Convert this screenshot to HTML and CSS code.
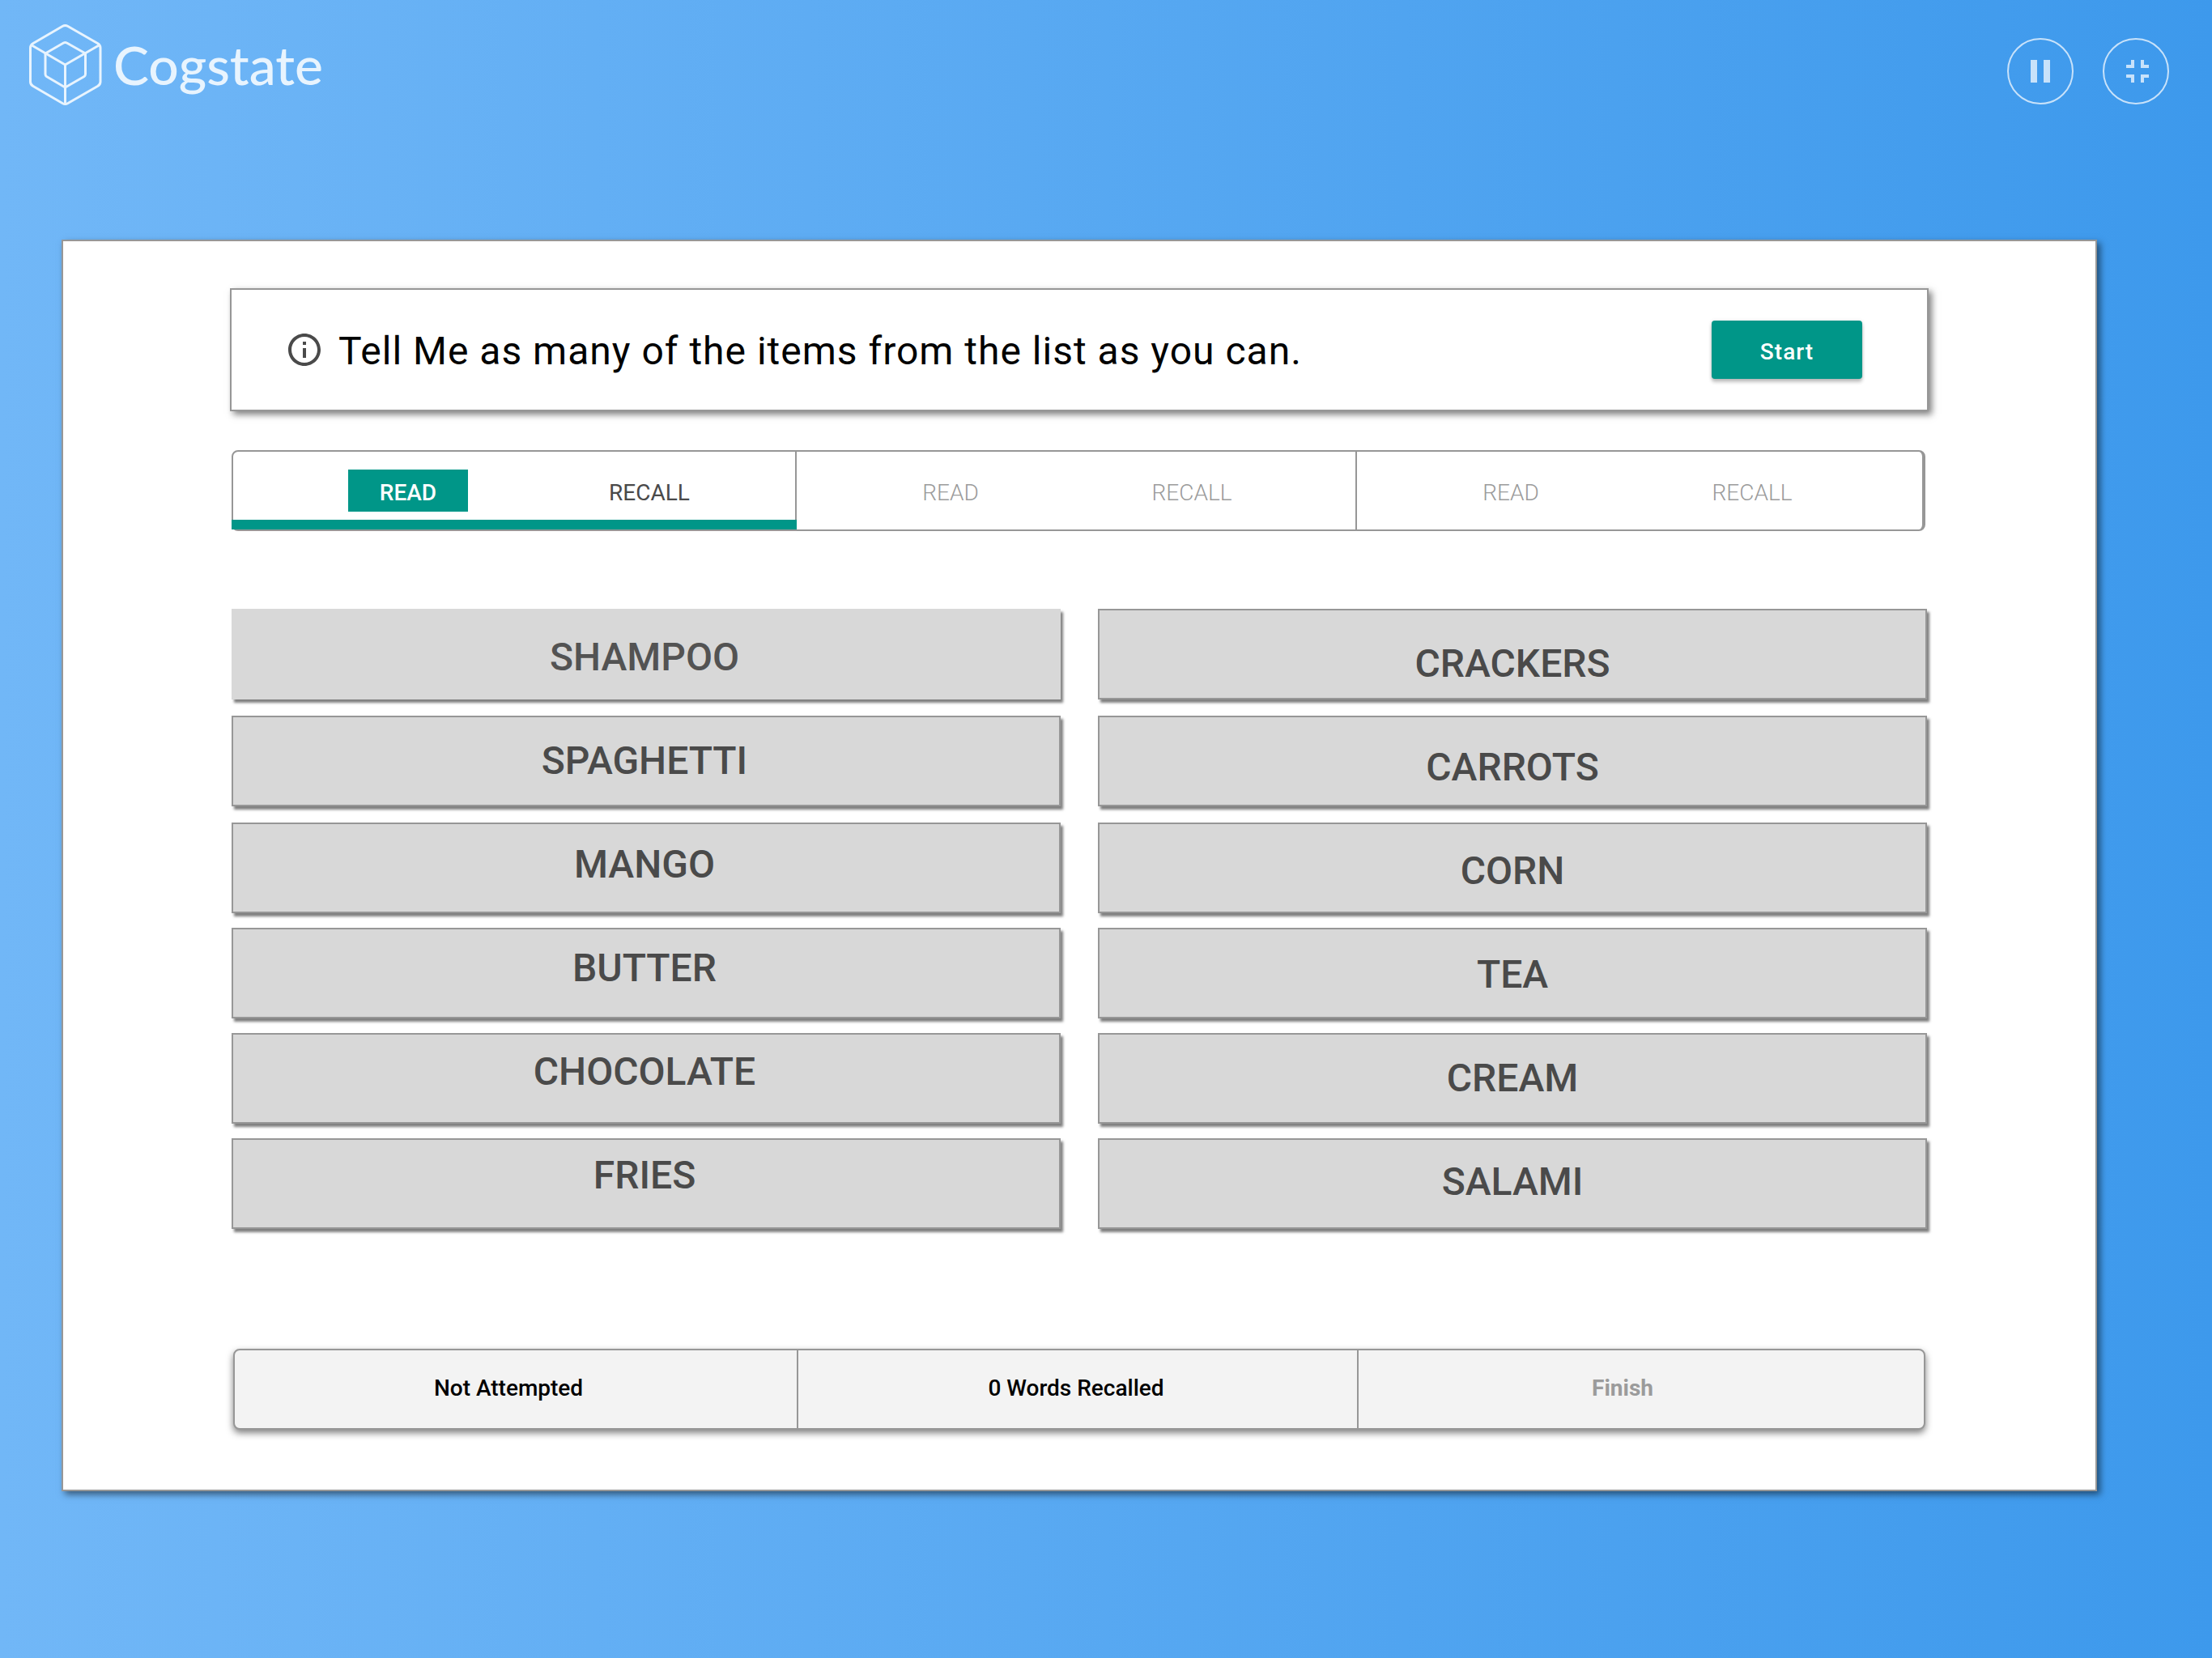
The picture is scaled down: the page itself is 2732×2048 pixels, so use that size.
FILE: index.html
```html
<!DOCTYPE html>
<html lang="en">
<head>
<meta charset="utf-8">
<meta name="viewport" content="width=device-width, initial-scale=1">
<title>Cogstate – Shopping list recall</title>
<link rel="stylesheet" href="styles.css">
</head>
<body>
<header class="topbar">
  <div class="brand">
    <svg class="brand-mark" viewBox="0 0 90 100" aria-hidden="true">
      <path d="M41.500 2.300Q44.500 .7 47.500 2.300L84.500 23.500Q88 25.500 88 29V71Q88 74.500 84.500 76.500L47.500 97.700Q44.500 99.300 41.500 97.700L5 76.500Q1.500 74.500 1.500 71V29Q1.500 25.500 5 23.500Z"/>
      <path d="M42.500 23Q44.500 21.800 46.500 23L69.500 36V61.500Q69.500 63.500 68 64.500L44.500 78L21.500 64.500Q20 63.500 20 61.500V36Z"/>
      <path d="M2.500 25.500L44.500 50L87 25.500M44.500 50V98"/>
    </svg>
    <span class="brand-name">Cogstate</span>
  </div>
  <div class="controls">
    <button class="round-button" type="button" aria-label="Pause">
      <svg viewBox="0 0 24 24" aria-hidden="true"><path d="M6 19h4V5H6v14zm8-14v14h4V5h-4z"/></svg>
    </button>
    <button class="round-button" type="button" aria-label="Exit full screen">
      <svg viewBox="-1 0 24 24" aria-hidden="true"><path d="M5 16h3v3h2v-5H5v2zm3-8H5v2h5V5H8v3zm6 11h2v-3h3v-2h-5v5zm2-11V5h-2v5h5V8h-3z"/></svg>
    </button>
  </div>
</header>

<main class="panel">
  <section class="prompt">
    <svg class="prompt-icon" viewBox="0 0 24 24" aria-hidden="true"><path d="M11 7h2v2h-2zm0 4h2v6h-2zm1-9C6.480 2 2 6.480 2 12s4.480 10 10 10 10-4.480 10-10S17.520 2 12 2zm0 18c-4.410 0-8-3.590-8-8s3.590-8 8-8 8 3.590 8 8-3.590 8-8 8z"/></svg>
    <p class="prompt-text">Tell Me as many of the items from the list as you can.</p>
    <button class="start" type="button">Start</button>
  </section>

  <nav class="trials" aria-label="Trials">
    <div class="trial trial-active">
      <button class="phase phase-current" type="button">READ</button>
      <button class="phase" type="button">RECALL</button>
    </div>
    <div class="trial trial-second">
      <button class="phase" type="button" disabled>READ</button>
      <button class="phase" type="button" disabled>RECALL</button>
    </div>
    <div class="trial trial-third">
      <button class="phase" type="button" disabled>READ</button>
      <button class="phase" type="button" disabled>RECALL</button>
    </div>
  </nav>

  <section class="words" aria-label="Word list">
    <div class="column">
      <div class="tiles">
        <button class="tile tile-plain" type="button" id="shampoo"></button>
        <button class="tile" type="button" id="spaghetti"></button>
        <button class="tile" type="button" id="mango"></button>
        <button class="tile" type="button" id="butter"></button>
        <button class="tile" type="button" id="chocolate"></button>
        <button class="tile" type="button" id="fries"></button>
      </div>
      <div class="labels labels-left">
        <label class="muted" for="shampoo">SHAMPOO</label>
        <label for="spaghetti">SPAGHETTI</label>
        <label for="mango">MANGO</label>
        <label for="butter">BUTTER</label>
        <label for="chocolate">CHOCOLATE</label>
        <label for="fries">FRIES</label>
      </div>
    </div>
    <div class="column">
      <div class="tiles">
        <button class="tile" type="button" id="crackers"></button>
        <button class="tile" type="button" id="carrots"></button>
        <button class="tile" type="button" id="corn"></button>
        <button class="tile" type="button" id="tea"></button>
        <button class="tile" type="button" id="cream"></button>
        <button class="tile" type="button" id="salami"></button>
      </div>
      <div class="labels labels-right">
        <label for="crackers">CRACKERS</label>
        <label for="carrots">CARROTS</label>
        <label for="corn">CORN</label>
        <label for="tea">TEA</label>
        <label for="cream">CREAM</label>
        <label for="salami">SALAMI</label>
      </div>
    </div>
  </section>

  <footer class="summary">
    <button class="summary-cell summary-status" type="button">Not Attempted</button>
    <div class="summary-cell summary-count">0 Words Recalled</div>
    <button class="summary-cell summary-finish" type="button" disabled>Finish</button>
  </footer>
</main>
</body>
</html>
```
FILE: styles.css
```css
* {
  box-sizing: border-box;
}

body {
  margin: 0;
  min-height: 100vh;
  background: linear-gradient(90deg, #71b7f7 0%, #3d99ec 100%);
  font-family: Roboto, "Liberation Sans", sans-serif;
  font-size: 28px;
  color: #000;
}

button {
  margin: 0;
  padding: 0;
  border: 0;
  background: none;
  font: inherit;
  color: inherit;
}

.topbar {
  display: flex;
  align-items: center;
  justify-content: space-between;
  height: 176px;
  padding: 0 53px 0 36px;
}

.brand {
  display: flex;
  align-items: center;
  gap: 14px;
  padding-bottom: 16px;
}

.brand-mark {
  width: 90px;
  height: 100px;
  fill: none;
  stroke: #e8f4fe;
  stroke-width: 3;
  stroke-linejoin: round;
}

.brand-name {
  font-family: Lato, sans-serif;
  font-size: 66px;
  font-weight: 500;
  line-height: 76px;
  color: #e8f4fe;
}

.controls {
  display: flex;
  gap: 36px;
}

.round-button {
  display: flex;
  align-items: center;
  justify-content: center;
  width: 82px;
  height: 82px;
  border: 2px solid #c8e2fa;
  border-radius: 50%;
}

.round-button svg {
  width: 48px;
  height: 48px;
  fill: #c8e2fa;
}

.panel {
  margin: 120px 142px 0 76px;
  padding: 58px 206px 74px;
  border: 2px solid #979797;
  background: #fff;
  box-shadow: 4px 4px 8px rgba(0, 0, 0, 0.5);
}

.prompt {
  display: flex;
  align-items: center;
  gap: 18px;
  height: 152px;
  padding: 0 80px 0 66px;
  border: 2px solid #979797;
  background: #fff;
  box-shadow: 4px 4px 8px rgba(0, 0, 0, 0.5);
}

.prompt-icon {
  width: 48px;
  height: 48px;
  fill: #4a4a4a;
}

.prompt-text {
  flex: 1;
  margin: 0;
  padding-top: 4px;
  font-size: 48px;
  line-height: 56px;
  letter-spacing: 1px;
}

.start {
  width: 186px;
  height: 72px;
  padding-top: 4px;
  border-radius: 4px;
  background: #009688;
  box-shadow: 0 4px 4px rgba(0, 0, 0, 0.24), 0 0 4px rgba(0, 0, 0, 0.12);
  font-weight: 500;
  letter-spacing: 1px;
  color: #fff;
}

.trials {
  display: grid;
  grid-template-columns: 696fr 692fr 698fr;
  height: 100px;
  margin: 48px 4px 0 2px;
  border: 2px solid #979797;
  border-right-width: 4px;
  border-radius: 8px;
}

.trial {
  position: relative;
  display: flex;
  align-items: center;
  justify-content: center;
  gap: 150px;
}

.trial + .trial {
  font-weight: 300;
  color: #9b9b9b;
}

.trial-active {
  padding-left: 36px;
  border-right: 2px solid #979797;
  color: #4a4a4a;
}

.trial-active::after {
  content: "";
  position: absolute;
  right: -2px;
  bottom: 0;
  left: -2px;
  height: 12px;
  background: #009688;
}

.trial-second {
  padding-right: 12px;
  border-right: 2px solid #979797;
}

.trial-third {
  padding-right: 20px;
}

.phase {
  width: 148px;
  height: 52px;
  padding-top: 4px;
}

.phase-current {
  background: #009688;
  font-weight: 500;
  color: #fff;
}

.words {
  display: grid;
  grid-template-columns: 1fr 1fr;
  gap: 46px;
  margin: 96px 2px 0;
}

.column {
  display: grid;
}

.tiles,
.labels {
  grid-area: 1 / 1;
}

.tiles {
  display: grid;
  grid-template-rows: 132px 132px 130px 130px 130px 112px;
}

.tile {
  height: 112px;
  border: 2px solid #979797;
  background: #d8d8d8;
  box-shadow: 3px 4px 3px rgba(0, 0, 0, 0.5);
}

.tile-plain {
  border-color: #d8d8d8;
}

/* The words keep one even rhythm over the tiles. */
.labels {
  display: flex;
  flex-direction: column;
  align-items: center;
  height: 0;
  font-size: 48px;
  font-weight: 500;
  line-height: 128px;
  color: #4a4a4a;
}

.labels-left {
  margin-top: -4px;
  padding-right: 4px;
}

.labels-right {
  margin-top: 4px;
}

.muted {
  color: #535353;
}

.summary {
  display: grid;
  grid-template-columns: 696fr 692fr 698fr;
  height: 100px;
  margin: 148px 4px 0;
  border: 2px solid #979797;
  border-radius: 8px;
  background: #f3f3f3;
  box-shadow: 0 4px 8px rgba(0, 0, 0, 0.5);
}

.summary-cell {
  display: flex;
  align-items: center;
  justify-content: center;
  padding-bottom: 4px;
  font-weight: 500;
}

.summary-status {
  padding-right: 18px;
  border-right: 2px solid #979797;
}

.summary-count {
  padding-right: 4px;
  border-right: 2px solid #979797;
}

.summary-finish {
  padding-right: 46px;
  font-weight: 700;
  color: #9b9b9b;
}
```
